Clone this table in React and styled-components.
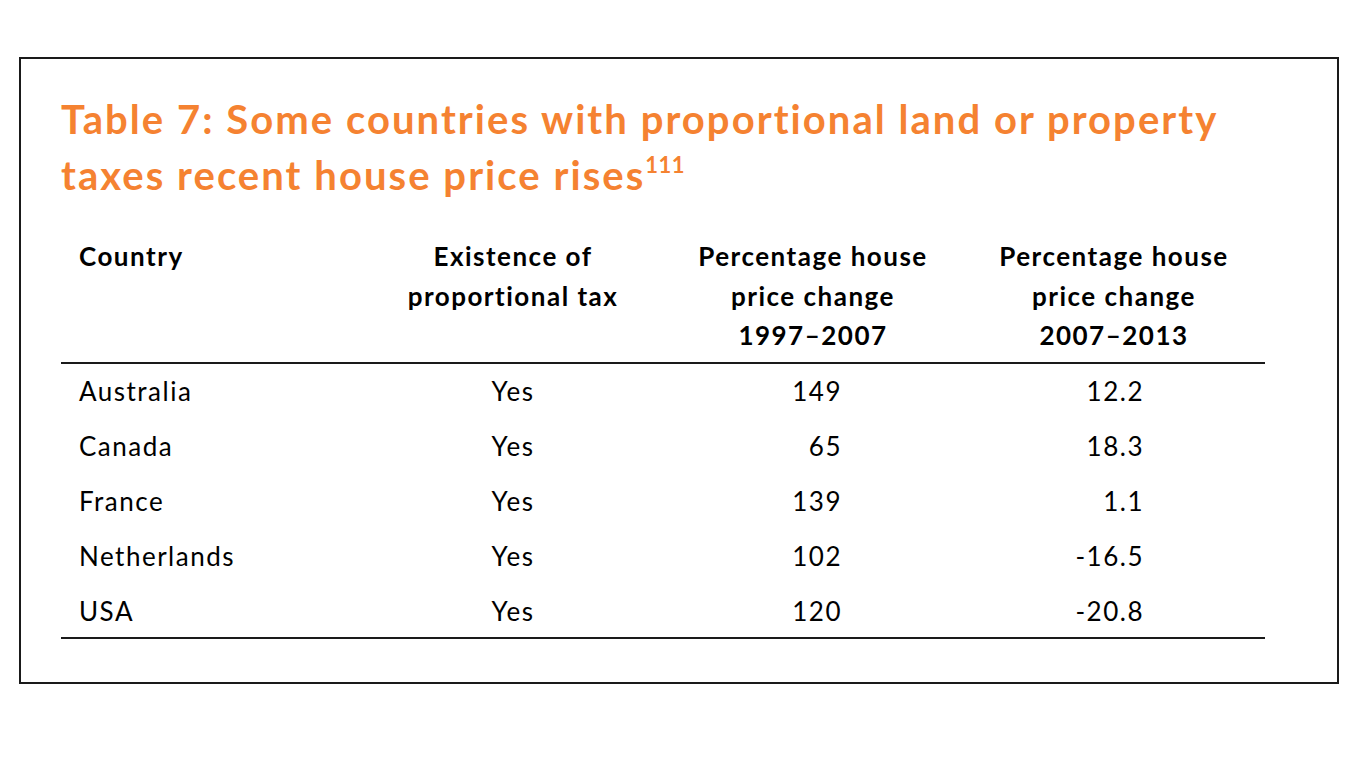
import styled, { createGlobalStyle } from "styled-components";

const GlobalStyle = createGlobalStyle`
  body {
    margin: 0;
    background: #ffffff;
    font-family: Lato, "Open Sans", sans-serif;
  }
`;

const Page = styled.div`
  width: 1366px;
  height: 768px;
  padding: 57px 0 0 19px;
  box-sizing: border-box;
`;

const Frame = styled.div`
  width: 1320px;
  height: 627px;
  box-sizing: border-box;
  border: 2px solid #1a1a1a;
  padding: 33px 0 0 40px;
`;

const Title = styled.h1`
  margin: 0;
  color: #f58231;
  font-family: Lato, sans-serif;
  font-weight: 700;
  font-size: 40px;
  letter-spacing: 2.05px;
  line-height: 55.5px;
  white-space: nowrap;

  sup {
    font-size: 22px;
    letter-spacing: 0.5px;
    line-height: 0;
    vertical-align: 17px;
  }
`;

const Table = styled.div`
  width: 1204px;
  margin-top: 34px;
  display: grid;
  grid-template-columns: 302px 300px 300px 302px;
  border-bottom: 2px solid #1a1a1a;
`;

const HeadCell = styled.div`
  font-weight: 700;
  font-size: 26px;
  letter-spacing: 1.5px;
  line-height: 39.5px;
  color: #000;
  text-align: ${(p) => (p.$left ? "left" : "center")};
  padding: 0 0 6px ${(p) => (p.$left ? "18px" : "0")};
  border-bottom: 2px solid #1a1a1a;
`;

const Cell = styled.div`
  font-size: 26px;
  letter-spacing: 1.5px;
  line-height: 55px;
  color: #000;
  text-align: ${(p) => p.$align || "left"};
  padding: 0 ${(p) => (p.$align === "right" ? "121px" : "0")} 0
    ${(p) => (p.$align === "left" || !p.$align ? "18px" : "0")};
  margin-bottom: ${(p) => (p.$last ? "-2px" : "0")};
`;

const rows = [
  ["Australia", "Yes", "149", "12.2"],
  ["Canada", "Yes", "65", "18.3"],
  ["France", "Yes", "139", "1.1"],
  ["Netherlands", "Yes", "102", "-16.5"],
  ["USA", "Yes", "120", "-20.8"],
];

const App = () => {
  return (
    <Page>
      <GlobalStyle />
      <Frame>
        <Title>
          Table 7: Some countries with proportional land or property
          <br />
          taxes recent house price rises<sup>111</sup>
        </Title>
        <Table>
          <HeadCell $left>Country</HeadCell>
          <HeadCell>
            Existence of
            <br />
            proportional tax
          </HeadCell>
          <HeadCell>
            Percentage house
            <br />
            price change
            <br />
            1997–2007
          </HeadCell>
          <HeadCell>
            Percentage house
            <br />
            price change
            <br />
            2007–2013
          </HeadCell>
          {rows.map((r, i) => {
            const last = i === rows.length - 1;
            return [
              <Cell key={r[0] + "a"} $last={last}>
                {r[0]}
              </Cell>,
              <Cell key={r[0] + "b"} $align="center" $last={last}>
                {r[1]}
              </Cell>,
              <Cell key={r[0] + "c"} $align="right" $last={last}>
                {r[2]}
              </Cell>,
              <Cell key={r[0] + "d"} $align="right" $last={last}>
                {r[3]}
              </Cell>,
            ];
          })}
        </Table>
      </Frame>
    </Page>
  );
};

export default App;
